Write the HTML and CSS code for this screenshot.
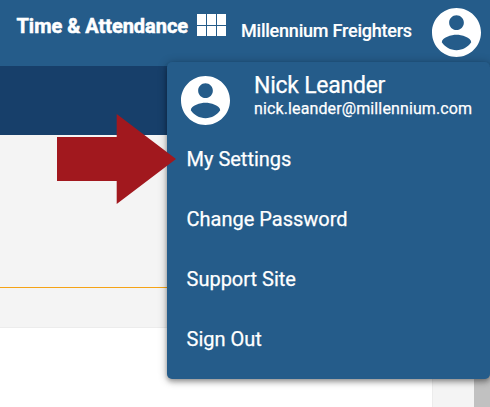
FILE: index.html
```html
<!DOCTYPE html>
<html lang="en">
<head>
<meta charset="utf-8">
<title>Time &amp; Attendance</title>
<link rel="stylesheet" href="styles.css">
</head>
<body>
<svg class="defs" width="0" height="0" aria-hidden="true">
  <symbol id="account" viewBox="2 2 20 20"><path d="M12 2C6.480 2 2 6.480 2 12s4.480 10 10 10 10-4.480 10-10S17.520 2 12 2zm0 3c1.660 0 3 1.340 3 3s-1.340 3-3 3-3-1.340-3-3 1.340-3 3-3zm0 14.200c-2.500 0-4.710-1.280-6-3.220.030-1.990 4-3.080 6-3.080 1.990 0 5.970 1.090 6 3.080-1.290 1.940-3.500 3.220-6 3.220z"/></symbol>
</svg>
<div class="page">
  <header class="topbar">
    <span class="product">Time &amp; Attendance</span>
    <span class="modules"><i></i><i></i><i></i><i></i><i></i><i></i></span>
    <span class="company">Millennium Freighters</span>
    <svg class="avatar"><use href="#account"/></svg>
  </header>
  <div class="subbar"></div>
  <main class="content">
    <div class="body">
      <div class="toolbar"></div>
      <div class="lower"><div class="sheet"></div></div>
    </div>
    <div class="scrollbar"></div>
  </main>
  <nav class="menu">
    <div class="profile">
      <svg class="avatar"><use href="#account"/></svg>
      <div class="who">
        <div class="name">Nick Leander</div>
        <div class="email">nick.leander@millennium.com</div>
      </div>
    </div>
    <a class="item">My Settings</a>
    <a class="item">Change Password</a>
    <a class="item">Support Site</a>
    <a class="item">Sign Out</a>
  </nav>
  <svg class="arrow" viewBox="0 0 119 90"><path d="M0 23H59.700V0L119 45 59.700 90V67H0z"/></svg>
</div>
</body>
</html>
```
FILE: styles.css
```css
* { box-sizing: border-box; }
body { margin: 0; font-family: Roboto, "Liberation Sans", sans-serif; color: #fff; }
.defs { position: absolute; }
.page { position: relative; width: 490px; height: 407px; overflow: hidden; display: flex; flex-direction: column; background: #f4f4f4; }
.topbar { height: 66px; flex: none; display: flex; align-items: flex-start; padding-left: 16.5px; background: #255c8a; white-space: nowrap; }
.product { width: 180.5px; padding-top: 14px; font-size: 20px; line-height: 24px; font-weight: 700; letter-spacing: -.03px; -webkit-text-stroke: .5px #fff; }
.modules { display: grid; grid-template-columns: repeat(3, 9px); grid-template-rows: 11px 10px; gap: 1px; margin-top: 14px; }
.modules i { background: #fff; }
.company { width: 191px; margin-left: 15px; padding-top: 20px; font-size: 18px; line-height: 22px; font-weight: 500; letter-spacing: -.22px; -webkit-text-stroke: .15px #fff; }
.avatar { width: 49px; height: 49px; flex: none; fill: #fff; }
.topbar .avatar { margin-top: 7.5px; }
.subbar { height: 69px; flex: none; background: #173f6a; }
.content { flex: 1; display: flex; }
.body { flex: 1; display: flex; flex-direction: column; }
.toolbar { height: 153px; border-bottom: 1px solid #f5a316; }
.lower { flex: 1; padding-top: 40px; display: flex; }
.sheet { width: 432px; background: #fff; box-shadow: 0 0 1px rgba(0,0,0,.2); }
.scrollbar { width: 16px; background: #c1c1c1; }
.menu { position: absolute; left: 167px; top: 62px; width: 323px; height: 317px; border-radius: 5px; background: #255c8a; box-shadow: 0 2px 4px -1px rgba(0,0,0,.2), 0 4px 5px rgba(0,0,0,.14), 0 1px 10px rgba(0,0,0,.3); white-space: nowrap; -webkit-text-stroke: .25px #fff; }
.menu .avatar { stroke: none; }
.profile { height: 67px; display: flex; padding: 13.5px 0 0 14px; }
.who { margin-left: 24px; margin-top: -3px; }
.name { font-size: 23px; line-height: 26px; letter-spacing: -.25px; }
.email { font-size: 16px; line-height: 20px; letter-spacing: .12px; }
.item { display: flex; align-items: center; height: 60px; padding-left: 19.5px; font-size: 20px; }
.arrow { position: absolute; left: 57px; top: 114px; width: 119px; height: 90px; fill: #a1181e; }
```
